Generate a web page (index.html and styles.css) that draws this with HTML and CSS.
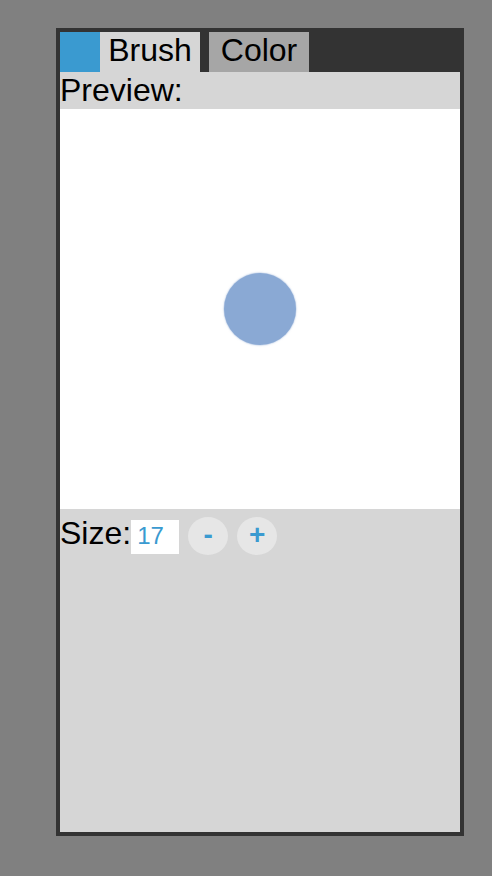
FILE: index.html
```html
<!DOCTYPE html>
<html>
<head>
<meta charset="utf-8">
<link rel="stylesheet" href="styles.css">
</head>
<body>
<div class="panel">
  <div class="tabbar">
    <div class="swatch"></div>
    <div class="tab active">Brush</div>
    <div class="tab">Color</div>
  </div>
  <div class="label">Preview:</div>
  <div class="preview"><div class="dot"></div></div>
  <div class="size-row">
    <span class="size-label">Size:</span>
    <div class="size-input">17</div>
    <div class="btn">-</div>
    <div class="btn">+</div>
  </div>
</div>
</body>
</html>
```
FILE: styles.css
```css
html, body { margin: 0; padding: 0; }
body {
  background: #808080;
  font-family: "Liberation Sans", Arial, sans-serif;
  width: 492px;
  height: 876px;
  overflow: hidden;
}
.panel {
  margin: 28px 0 0 56px;
  width: 400px;
  height: 800px;
  border: 4px solid #333333;
  background: #d6d6d6;
  display: flex;
  flex-direction: column;
}
.tabbar {
  height: 40px;
  background: #333333;
  display: flex;
  gap: 9px;
}
.swatch {
  width: 40px;
  height: 40px;
  background: #3a9ad0;
  margin-right: -9px;
}
.tab {
  width: 100px;
  height: 40px;
  background: #a6a6a6;
  font-size: 32px;
  line-height: 36px;
  text-align: center;
  color: #000;
}
.tab.active { background: #d6d6d6; }
.label {
  font-size: 32px;
  line-height: 37px;
  height: 37px;
}
.preview {
  width: 400px;
  height: 400px;
  background: #ffffff;
  display: flex;
  align-items: center;
  justify-content: center;
}
.dot {
  width: 72px;
  height: 72px;
  border-radius: 50%;
  background: #8aa9d4;
  box-shadow: 0 0 1.5px 0.5px rgba(138,169,212,0.6);
}
.size-row {
  display: flex;
  align-items: flex-start;
}
.size-label {
  font-size: 32px;
  line-height: 37px;
  margin-top: 6px;
}
.size-input {
  width: 48px;
  height: 34px;
  background: #fff;
  color: #3a9ad0;
  font-size: 24px;
  line-height: 32px;
  padding-left: 6px;
  box-sizing: border-box;
  margin-top: 11px;
}
.btn {
  width: 40px;
  height: 38px;
  border-radius: 50%;
  background: #e6e6e6;
  color: #3a9ad0;
  font-size: 28px;
  font-weight: bold;
  text-align: center;
  line-height: 36px;
  margin-left: 9px;
  margin-top: 8px;
}
```
